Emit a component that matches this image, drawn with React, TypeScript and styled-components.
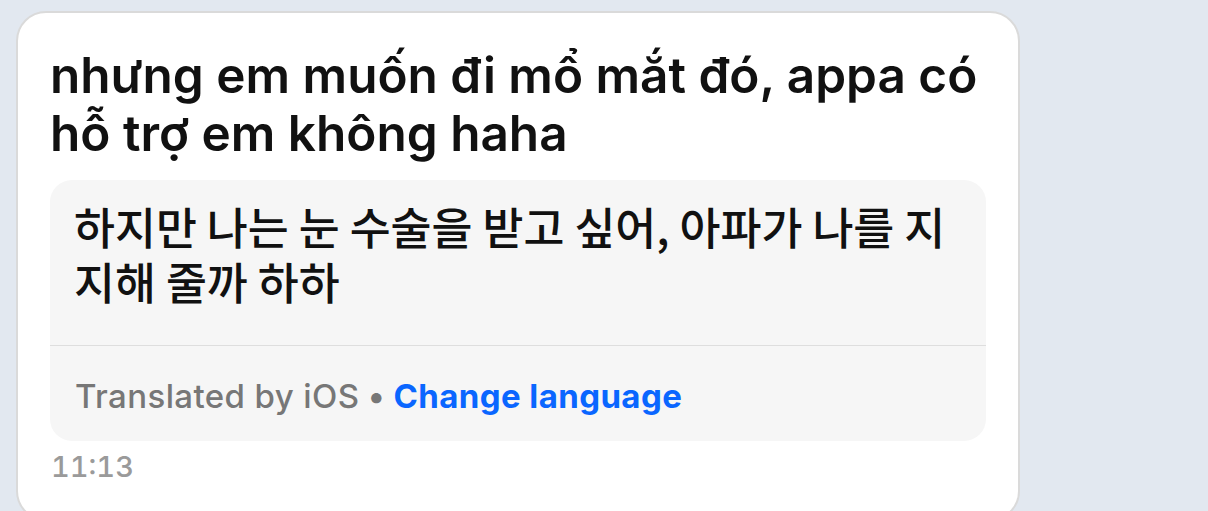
import React from 'react';
import styled, { createGlobalStyle } from 'styled-components';

const GlobalStyle = createGlobalStyle`
    html, body {
        margin: 0;
        padding: 0;
        background: #e2e8f0;
    }
    body {
        width: 1208px;
        height: 511px;
        overflow: hidden;
        font-family: Inter, "Noto Sans", "Noto Sans CJK KR", sans-serif;
    }
`;

const Page = styled('div')`
    padding: 11px 0 0 16px;
`;

const Bubble = styled('div')`
    box-sizing: border-box;
    width: 1004px;
    min-height: 510px;
    background: #ffffff;
    border: 2px solid #dadada;
    border-radius: 30px;
    padding: 33px 32px 0 32px;
    display: flex;
    flex-direction: column;
`;

const OriginalText = styled('p')`
    margin: 0;
    font-family: Inter, "Noto Sans", sans-serif;
    font-size: 49.5px;
    line-height: 58px;
    font-weight: 600;
    color: #111111;
`;

const TranslationCard = styled('div')`
    margin-top: 18px;
    background: #f6f6f6;
    border-radius: 22px;
    display: flex;
    flex-direction: column;
`;

const TranslatedText = styled('p')`
    margin: 0;
    padding: 18px 18px 37px 24px;
    font-family: "Noto Sans CJK KR", "Noto Sans", sans-serif;
    font-size: 44.5px;
    line-height: 55px;
    font-weight: 500;
    color: #111111;
`;

const Divider = styled('div')`
    height: 1px;
    background: #dedede;
`;

const Footer = styled('div')`
    display: flex;
    align-items: baseline;
    gap: 9px;
    padding: 30px 24px 25px 25px;
    font-family: Inter, "Noto Sans", sans-serif;
    font-size: 33px;
    line-height: 40px;
    letter-spacing: 0.4px;
`;

const FooterLabel = styled('span')`
    color: #777777;
    font-weight: 500;
`;

const Dot = styled('span')`
    color: #777777;
    font-weight: 700;
`;

const FooterLink = styled('span')<{ $color?: string }>`
    color: ${({ $color }) => $color || '#0a66ff'};
    font-weight: 700;
`;

const Time = styled('div')`
    margin-top: 9px;
    padding-left: 1px;
    font-family: Inter, "Noto Sans", sans-serif;
    font-size: 29px;
    line-height: 34px;
    font-weight: 500;
    color: #9a9a9a;
    font-variant-numeric: tabular-nums;
`;

export default function App() {
    return (
        <>
            <GlobalStyle />
            <Page>
                <Bubble>
                    <OriginalText>nhưng em muốn đi mổ mắt đó, appa có hỗ trợ em không haha</OriginalText>
                    <TranslationCard>
                        <TranslatedText>하지만 나는 눈 수술을 받고 싶어, 아파가 나를 지지해 줄까 하하</TranslatedText>
                        <Divider />
                        <Footer>
                            <FooterLabel>Translated by iOS</FooterLabel>
                            <Dot>•</Dot>
                            <FooterLink>Change language</FooterLink>
                        </Footer>
                    </TranslationCard>
                    <Time>11:13</Time>
                </Bubble>
            </Page>
        </>
    );
}
